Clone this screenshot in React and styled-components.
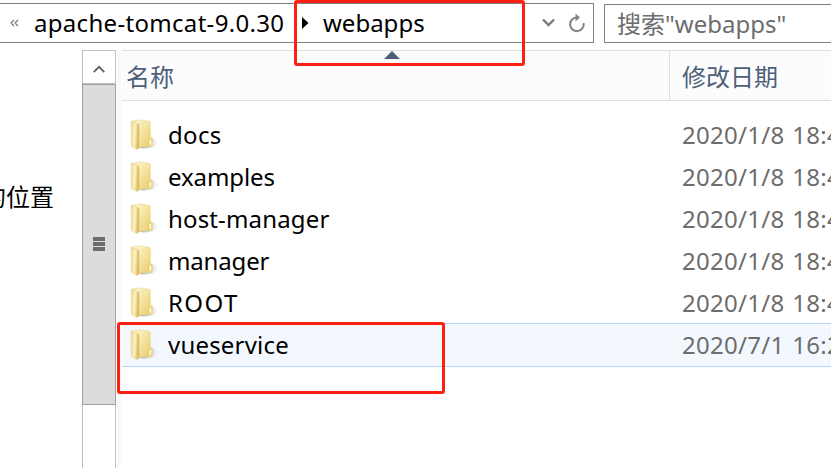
import React from "react";
import styled, { createGlobalStyle } from "styled-components";

const GlobalStyle = createGlobalStyle`
  * { box-sizing: border-box; }
  body { margin: 0; background: #fff; overflow: hidden; }
`;

const Window = styled.div`
  position: relative;
  width: 831px;
  height: 468px;
  overflow: hidden;
  background: #fff;
  color: #000;
  font: 24px/32px "Noto Sans", "Noto Sans CJK SC", sans-serif;
  white-space: nowrap;
`;

const Toolbar = styled.div`
  display: flex;
  height: 50px;
  padding-top: 3px;
  gap: 10px;
`;

const AddressBar = styled.div`
  display: flex;
  flex: none;
  align-items: center;
  width: 594px;
  height: 40px;
  border: 1px solid #828282;
  border-left: 0;
  svg { flex: none; }
`;

const Crumb = styled.span`
  flex: none;
  width: ${(p) => p.$width}px;
  margin-left: ${(p) => p.$gap}px;
  letter-spacing: ${(p) => p.$track}px;
`;

const ChevronSlot = styled.span`
  display: flex;
  margin-left: ${(p) => p.$gap}px;
`;

const SearchBox = styled.div`
  flex: none;
  width: 240px;
  height: 39px;
  margin-top: 1px;
  padding: 3px 0 0 12px;
  border: 1px solid #828282;
  color: #6d6d6d;
`;

const Body = styled.div`
  display: flex;
  height: 418px;
`;

const NavPane = styled.div`
  display: flex;
  flex: none;
  justify-content: flex-end;
  width: 82px;
  padding: 131px 28px 0 0;
  overflow: hidden;
`;

const ScrollBar = styled.div`
  flex: none;
  width: 34px;
  border: solid #c0c0c0;
  border-width: 0 1px;
`;

const ScrollButton = styled.div`
  display: flex;
  align-items: center;
  justify-content: center;
  height: 34px;
  border: solid #c0c0c0;
  border-width: 1px 0;
  padding-top: 4px;
`;

const ScrollThumb = styled.div`
  display: flex;
  flex-direction: column;
  align-items: center;
  justify-content: center;
  gap: 1px;
  height: 321px;
  margin: 0 -1px;
  padding-bottom: 1px;
  background: #dcdcdc;
  border: 1px solid #a0a0a0;
`;

const Grip = styled.i`
  width: 12px;
  height: 4px;
  background: #6c6c6c;
`;

const PaneEdge = styled.div`
  flex: none;
  width: 4px;
  margin: 1px 1px 0 1px;
  background: #f8f8f8;
`;

const FilePane = styled.div`
  flex: 1;
  min-width: 0;
  overflow: hidden;
`;

const Header = styled.div`
  display: flex;
  height: 51px;
  margin-bottom: 13px;
  border: solid #dedede;
  border-width: 1px 0;
  background: #fcfcfc;
`;

const HeaderCell = styled.div`
  flex: none;
  width: ${(p) => p.$width}px;
  padding: 10px 0 0 ${(p) => p.$pad}px;
  border-right: 1px solid #dedede;
  color: #4c607a;
`;

const Row = styled.div`
  display: flex;
  align-items: center;
  height: ${(p) => (p.$selected ? 44 : 42)}px;
  margin-top: ${(p) => (p.$selected ? -1 : 0)}px;
  padding-left: 8px;
  background: ${(p) => (p.$selected ? "#f3f8ff" : "transparent")};
  border: solid ${(p) => (p.$selected ? "#b8d4fb" : "transparent")};
  border-width: ${(p) => (p.$selected ? "1px 0" : "0")};
  svg { flex: none; }
`;

const FileName = styled.span`
  flex: none;
  width: 514px;
  margin-left: 8px;
  letter-spacing: ${(p) => p.$track}px;
`;

const FileDate = styled.span`
  color: #6d6d6d;
  letter-spacing: 0.3px;
  word-spacing: 1px;
`;

const SortMark = styled.svg`
  position: absolute;
  left: 384px;
  top: 51px;
`;

const Highlight = styled.div`
  position: absolute;
  left: ${(p) => p.$x}px;
  top: ${(p) => p.$y}px;
  width: ${(p) => p.$w}px;
  height: ${(p) => p.$h}px;
  border: 3px solid #ff1f12;
  border-radius: 3px;
`;

const Folder = () => (
  <svg width="30" height="32" viewBox="0 0 30 32">
    <defs>
      <linearGradient id="back" x1="0" y1="0" x2="1" y2="1">
        <stop offset="0" stopColor="#fff9d8" />
        <stop offset="0.5" stopColor="#f5e4a0" />
        <stop offset="1" stopColor="#e8cb6c" />
      </linearGradient>
      <linearGradient id="front" x1="0" y1="0" x2="1" y2="0.2">
        <stop offset="0" stopColor="#f0dc96" />
        <stop offset="0.6" stopColor="#fbf0bf" />
        <stop offset="1" stopColor="#e0bf66" />
      </linearGradient>
      <linearGradient id="shade" x1="0" y1="0" x2="1" y2="0">
        <stop offset="0" stopColor="#80848c" stopOpacity="0.75" />
        <stop offset="1" stopColor="#b8bcc4" stopOpacity="0.05" />
      </linearGradient>
    </defs>
    <path d="M9 29 21 18 25 20 28.8 24 23 28.5 14 29.5Z" fill="url(#shade)" />
    <path d="M2 2 10 1 19.5 2.3Q20.3 2.7 20.3 4V19L19 27 9 28.5Z" fill="url(#back)" stroke="#ead58e" strokeWidth="0.6" />
    <path d="M18.5 20 20.8 18.8 22.3 20.3V26.2L20 28 18 27.5Z" fill="#f3d97f" stroke="#deBf5f" strokeWidth="0.5" />
    <path d="M20.3 21V25.5" stroke="#fff" strokeWidth="1.3" />
    <path d="M1.3 2.2 7.2 4.4Q8.4 4.9 8.4 6.2V29.5Q7 31.3 5.6 29.8L1.3 27Z" fill="url(#front)" stroke="#e2c97f" strokeWidth="0.6" />
    <path d="M8.7 5.4V28.8" stroke="#cdad58" strokeWidth="0.8" />
  </svg>
);

const files = [
  { name: "docs", date: "2020/1/8 18:42", track: 0.3 },
  { name: "examples", date: "2020/1/8 18:42", track: -0.1 },
  { name: "host-manager", date: "2020/1/8 18:42", track: 0.15 },
  { name: "manager", date: "2020/1/8 18:42", track: -0.15 },
  { name: "ROOT", date: "2020/1/8 18:42", track: 1.4 },
  { name: "vueservice", date: "2020/7/1 16:22", track: 0.2, selected: true },
];

export default function App() {
  return (
    <Window>
      <GlobalStyle />
      <Toolbar>
        <AddressBar>
          <ChevronSlot $gap={10}>
            <svg width="9" height="8" viewBox="0 0 9 8" fill="none" stroke="#707070" strokeWidth="1.1">
              <path d="M4 1 1 4 4 7M8 1 5 4 8 7" />
            </svg>
          </ChevronSlot>
          <Crumb $gap={15} $width={268} $track={0.31}>apache-tomcat-9.0.30</Crumb>
          <svg width="7" height="12" viewBox="0 0 7 12"><path d="M0 0 6.5 6 0 12Z" /></svg>
          <Crumb $gap={14} $width={219} $track={0}>webapps</Crumb>
          <svg width="13" height="10" viewBox="0 0 13 10" fill="none" stroke="#7b7b7b" strokeWidth="2.4">
            <path d="M1 1.5 6.5 7 12 1.5" />
          </svg>
          <ChevronSlot $gap={13}>
            <svg width="18" height="20" viewBox="0 0 18 20" fill="none" stroke="#858585" strokeWidth="2.1">
              <path d="M8.5 4.5A6.8 6.8 0 1 0 15.6 10.2" />
              <path d="M7.5 0.5 12 4.5 7.5 8.5Z" fill="#858585" stroke="none" />
            </svg>
          </ChevronSlot>
        </AddressBar>
        <SearchBox>搜索"webapps"</SearchBox>
      </Toolbar>
      <Body>
        <NavPane>的位置</NavPane>
        <ScrollBar>
          <ScrollButton>
            <svg width="12" height="9" viewBox="0 0 12 9" fill="none" stroke="#606060" strokeWidth="1.8">
              <path d="M0.7 7.2 6 1.8 11.3 7.2" />
            </svg>
          </ScrollButton>
          <ScrollThumb><Grip /><Grip /><Grip /></ScrollThumb>
        </ScrollBar>
        <PaneEdge />
        <FilePane>
          <Header>
            <HeaderCell $width={548} $pad={4}>名称</HeaderCell>
            <HeaderCell $width={240} $pad={12}>修改日期</HeaderCell>
          </Header>
          {files.map((f) => (
            <Row key={f.name} $selected={f.selected}>
              <Folder />
              <FileName $track={f.track}>{f.name}</FileName>
              <FileDate>{f.date}</FileDate>
            </Row>
          ))}
        </FilePane>
      </Body>
      <SortMark width="16" height="9" viewBox="0 0 16 9"><path d="M0 8 8 0 16 8Z" fill="#4c607a" /></SortMark>
      <Highlight $x={294} $y={0} $w={231} $h={66} />
      <Highlight $x={117} $y={322} $w={328} $h={72} />
    </Window>
  );
}
